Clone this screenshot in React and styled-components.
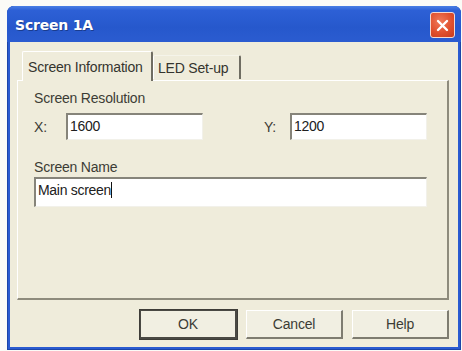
import React from "react";
import styled, { createGlobalStyle } from "styled-components";

const GlobalStyle = createGlobalStyle`
	html, body {
		margin: 0;
		background: #fbfbf7;
		font-family: "Liberation Sans", Arial, sans-serif;
	}
`;

const Page = styled.div`
	padding: 6px 1px 1px 7px;
`;

const Window = styled.div`
	width: 454px;
	height: 344px;
	display: flex;
	flex-direction: column;
	border-radius: 7px 7px 0 0;
	background: #2a5bd0;
	box-shadow: inset 0 0 0 1px #1c45a8;
	overflow: hidden;
`;

const TitleBar = styled.div`
	height: 36px;
	display: flex;
	align-items: center;
	justify-content: space-between;
	padding: 0 6px 0 8px;
	background: linear-gradient(to bottom, #4a7fe4 0%, #2d60d6 12%, #2658cc 60%, #2b5cd0 100%);
`;

const Title = styled.span`
	color: #ffffff;
	font-family: "DejaVu Sans", "Liberation Sans", sans-serif;
	font-weight: bold;
	font-size: 14px;
	letter-spacing: -0.2px;
	text-shadow: 1px 1px 0 #1a3c8e;
	margin-top: 2px;
`;

const CloseButton = styled.div`
	width: 25px;
	height: 26px;
	margin-top: 2px;
	box-sizing: border-box;
	border: 1px solid #f4d8d0;
	border-radius: 3px;
	background: radial-gradient(circle at 40% 35%, #f07a5a 0%, #e0502e 55%, #c83a1c 100%);
	display: flex;
	align-items: center;
	justify-content: center;
`;

const Body = styled.div`
	flex: 1;
	margin: 0 3px 3px 3px;
	background: #efecdb;
	display: flex;
	flex-direction: column;
	padding: 9px 9px 8px 7px;
	box-sizing: border-box;
`;

const Tabs = styled.div`
	display: flex;
	align-items: flex-end;
	padding-left: 5px;
	height: 29px;
	position: relative;
	z-index: 1;
`;

const Tab = styled.div`
	font-size: 14px;
	letter-spacing: -0.2px;
	color: #34342e;
	box-sizing: border-box;
	height: ${p => (p.$active ? "30px" : "24px")};
	margin-bottom: ${p => (p.$active ? "-1px" : "1px")};
	padding: 0 ${p => (p.$active ? "5px" : "4px")};
	display: flex;
	align-items: center;
	white-space: nowrap;
	background: #efecdb;
	border-top: 1px solid ${p => (p.$active ? "#ffffff" : "#f5f4ea")};
	border-left: 1px solid #ffffff;
	border-right: 2px solid #6f6d62;
	border-radius: 2px 2px 0 0;
	width: ${p => p.$width}px;
`;

const Panel = styled.div`
	width: 432px;
	height: 220px;
	box-sizing: border-box;
	border-top: 1px solid #ffffff;
	border-left: 1px solid #ffffff;
	border-right: 2px solid #8e8b7c;
	border-bottom: 2px solid #8e8b7c;
	padding: 9px 0 0 16px;
	display: flex;
	flex-direction: column;
`;

const Label = styled.div`
	font-size: 14px;
	letter-spacing: -0.2px;
	color: #3c3c35;
	line-height: 16px;
	width: ${p => (p.$width ? `${p.$width}px` : "auto")};
	flex-shrink: 0;
`;

const Row = styled.div`
	display: flex;
	align-items: center;
	margin-top: ${p => p.$top}px;
`;

const Spacer = styled.div`
	width: ${p => p.$width}px;
	flex-shrink: 0;
`;

const Input = styled.div`
	width: ${p => p.$width}px;
	height: ${p => p.$height}px;
	box-sizing: border-box;
	background: #ffffff;
	border-top: 2px solid #86847a;
	border-left: 2px solid #86847a;
	border-right: 1px solid #f2f1ea;
	border-bottom: 1px solid #f2f1ea;
	font-size: 14px;
	letter-spacing: -0.3px;
	color: #202020;
	padding: 3px 0 0 2px;
	display: flex;
	align-items: flex-start;
`;

const Caret = styled.span`
	display: inline-block;
	width: 1px;
	height: 16px;
	background: #111111;
`;

const Buttons = styled.div`
	display: flex;
	justify-content: flex-end;
	gap: 9px;
	margin-top: 10px;
`;

const Button = styled.div`
	width: 97px;
	height: 29px;
	box-sizing: border-box;
	font-size: 14px;
	letter-spacing: -0.2px;
	color: #3c3c35;
	display: flex;
	align-items: center;
	justify-content: center;
	background: #f1efe2;
	border-top: 1px solid #ffffff;
	border-left: 1px solid #ffffff;
	border-right: 2px solid #7e7c70;
	border-bottom: 2px solid #7e7c70;
	box-shadow: ${p => (p.$default ? "0 0 0 1px #3e3d38" : "none")};
	${p => p.$default && "border-color: #4a4944; border-width: 1px 2px 2px 1px;"}
`;

export default function App() {
	return (
		<Page>
			<GlobalStyle />
			<Window>
				<TitleBar>
					<Title>Screen 1A</Title>
					<CloseButton>
						<svg width="13" height="13" viewBox="0 0 13 13">
							<path d="M2 2 L11 11 M11 2 L2 11" stroke="#ffffff" strokeWidth="2.4" strokeLinecap="round" />
						</svg>
					</CloseButton>
				</TitleBar>
				<Body>
					<Tabs>
						<Tab $active $width={131}>Screen Information</Tab>
						<Tab $width={88}>LED Set-up</Tab>
					</Tabs>
					<Panel>
						<Label>Screen Resolution</Label>
						<Row $top={7}>
							<Label $width={32}>X:</Label>
							<Input $width={137} $height={27}>1600</Input>
							<Spacer $width={61} />
							<Label $width={26}>Y:</Label>
							<Input $width={137} $height={27}>1200</Input>
						</Row>
						<Row $top={19}>
							<Label>Screen Name</Label>
						</Row>
						<Row $top={2}>
							<Input $width={393} $height={30}>
								Main screen<Caret />
							</Input>
						</Row>
					</Panel>
					<Buttons>
						<Button $default>OK</Button>
						<Button>Cancel</Button>
						<Button>Help</Button>
					</Buttons>
				</Body>
			</Window>
		</Page>
	);
}
